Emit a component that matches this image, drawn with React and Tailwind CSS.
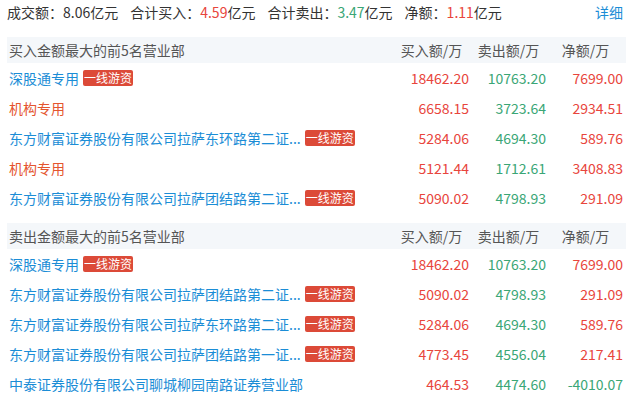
import React from "react";

const RED = "text-[#e8453c]";
const GREEN = "text-[#3aa676]";

const buyRows = [
  { name: "深股通专用", type: "blue", badge: true, buy: "18462.20", sell: "10763.20", net: "7699.00" },
  { name: "机构专用", type: "org", badge: false, buy: "6658.15", sell: "3723.64", net: "2934.51" },
  { name: "东方财富证券股份有限公司拉萨东环路第二证...", type: "blue", badge: true, buy: "5284.06", sell: "4694.30", net: "589.76" },
  { name: "机构专用", type: "org", badge: false, buy: "5121.44", sell: "1712.61", net: "3408.83" },
  { name: "东方财富证券股份有限公司拉萨团结路第二证...", type: "blue", badge: true, buy: "5090.02", sell: "4798.93", net: "291.09" },
];

const sellRows = [
  { name: "深股通专用", type: "blue", badge: true, buy: "18462.20", sell: "10763.20", net: "7699.00" },
  { name: "东方财富证券股份有限公司拉萨团结路第二证...", type: "blue", badge: true, buy: "5090.02", sell: "4798.93", net: "291.09" },
  { name: "东方财富证券股份有限公司拉萨东环路第二证...", type: "blue", badge: true, buy: "5284.06", sell: "4694.30", net: "589.76" },
  { name: "东方财富证券股份有限公司拉萨团结路第一证...", type: "blue", badge: true, buy: "4773.45", sell: "4556.04", net: "217.41" },
  { name: "中泰证券股份有限公司聊城柳园南路证券营业部", type: "blue", badge: false, buy: "464.53", sell: "4474.60", net: "-4010.07" },
];

const Badge = () => (
  <span className="ml-[4px] shrink-0 rounded-[2px] bg-[#dc4a38] px-[1px] text-[12px] leading-[16px] text-white">
    一线游资
  </span>
);

const Section = ({ title, rows }) => (
  <div>
    <div className="flex h-[26px] items-center bg-[#f4f7fa] px-[2px] text-[14px] text-[#555]">
      <div className="flex-1">{title}</div>
      <div className="w-[77px] text-center">买入额/万</div>
      <div className="w-[77px] text-center">卖出额/万</div>
      <div className="w-[77px] text-center">净额/万</div>
    </div>
    {rows.map((r, i) => (
      <div key={i} className="flex h-[30px] items-center px-[2px] pr-[3px] text-[14px]">
        <div className="flex min-w-0 flex-1 items-center">
          <span
            className={`whitespace-nowrap ${
              r.type === "org" ? "text-[#e4552f]" : "text-[#1b8dd6]"
            }`}
          >
            {r.name}
          </span>
          {r.badge && <Badge />}
        </div>
        <div className={`w-[77px] text-right ${RED}`}>{r.buy}</div>
        <div className={`w-[77px] text-right ${GREEN}`}>{r.sell}</div>
        <div className={`w-[77px] text-right ${r.net.startsWith("-") ? GREEN : RED}`}>{r.net}</div>
      </div>
    ))}
  </div>
);

export default function App() {
  return (
    <div
      className="h-[395px] w-[632px] overflow-hidden bg-white px-[7px] pr-[6px] text-[#333]"
      style={{ fontFamily: '"Noto Sans CJK SC", "Noto Sans", sans-serif' }}
    >
      <div className="flex h-[24px] items-center gap-3 text-[14px]">
        <span>成交额：8.06亿元</span>
        <span>
          合计买入：<span className={RED}>4.59</span>亿元
        </span>
        <span>
          合计卖出：<span className={GREEN}>3.47</span>亿元
        </span>
        <span>
          净额：<span className={RED}>1.11</span>亿元
        </span>
        <span className="ml-auto mr-[3px] text-[#1b8dd6]">详细</span>
      </div>
      <div className="mt-[13px]">
        <Section title="买入金额最大的前5名营业部" rows={buyRows} />
      </div>
      <div className="mt-[10px]">
        <Section title="卖出金额最大的前5名营业部" rows={sellRows} />
      </div>
    </div>
  );
}
